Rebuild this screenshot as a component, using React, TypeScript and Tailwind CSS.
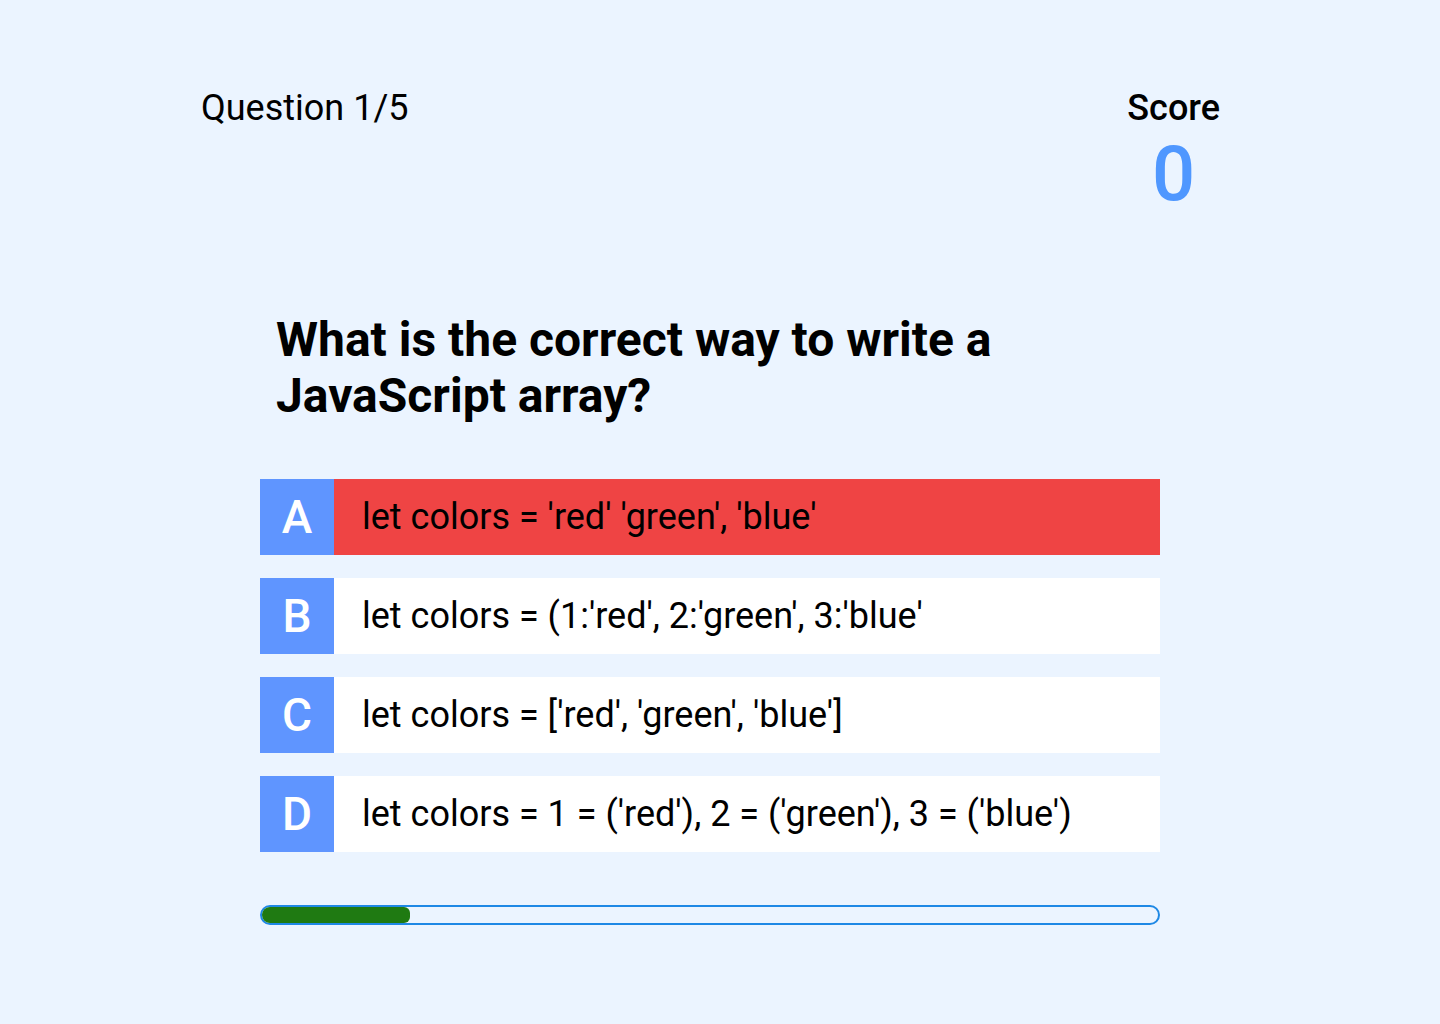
import React from "react";

const options = [
  { letter: "A", text: "let colors = 'red' 'green', 'blue'", wrong: true },
  { letter: "B", text: "let colors = (1:'red', 2:'green', 3:'blue'" },
  { letter: "C", text: "let colors = ['red', 'green', 'blue']" },
  { letter: "D", text: "let colors = 1 = ('red'), 2 = ('green'), 3 = ('blue')" },
];

export default function App() {
  return (
    <div
      className="min-h-[1024px] w-full bg-[#ebf4ff] text-black"
      style={{ fontFamily: "Roboto, 'Noto Sans', sans-serif" }}
    >
      <div className="flex justify-between pl-[201px] pr-[220px] pt-[86px]">
        <div className="text-[36px] leading-[44px]">Question 1/5</div>
        <div className="flex flex-col items-center">
          <div className="text-[36px] leading-[44px] font-medium">Score</div>
          <div className="mt-[8px] text-[76px] leading-[72px] text-[#4f97ff] font-medium">0</div>
        </div>
      </div>
      <div className="ml-[260px] w-[900px] pt-[102px]">
        <h1 className="pl-[16px] text-[48px] leading-[56px] font-bold">
          What is the correct way to write a
          <br />
          JavaScript array?
        </h1>
        <div className="mt-[55px] flex flex-col gap-[23px]">
          {options.map((o) => (
            <div
              key={o.letter}
              className={`flex h-[76px] ${o.wrong ? "bg-[#ef4444]" : "bg-white"}`}
            >
              <div className="flex w-[74px] items-center justify-center bg-[#5f95ff] text-[46px] font-medium text-white">
                {o.letter}
              </div>
              <div className="flex items-center pl-[28px] text-[36px]">{o.text}</div>
            </div>
          ))}
        </div>
        <div className="mt-[53px] h-[20px] rounded-full border-2 border-[#1e88e5] overflow-hidden">
          <div className="h-full w-[148px] rounded-[6px] bg-[#1f7a12]" />
        </div>
      </div>
    </div>
  );
}
